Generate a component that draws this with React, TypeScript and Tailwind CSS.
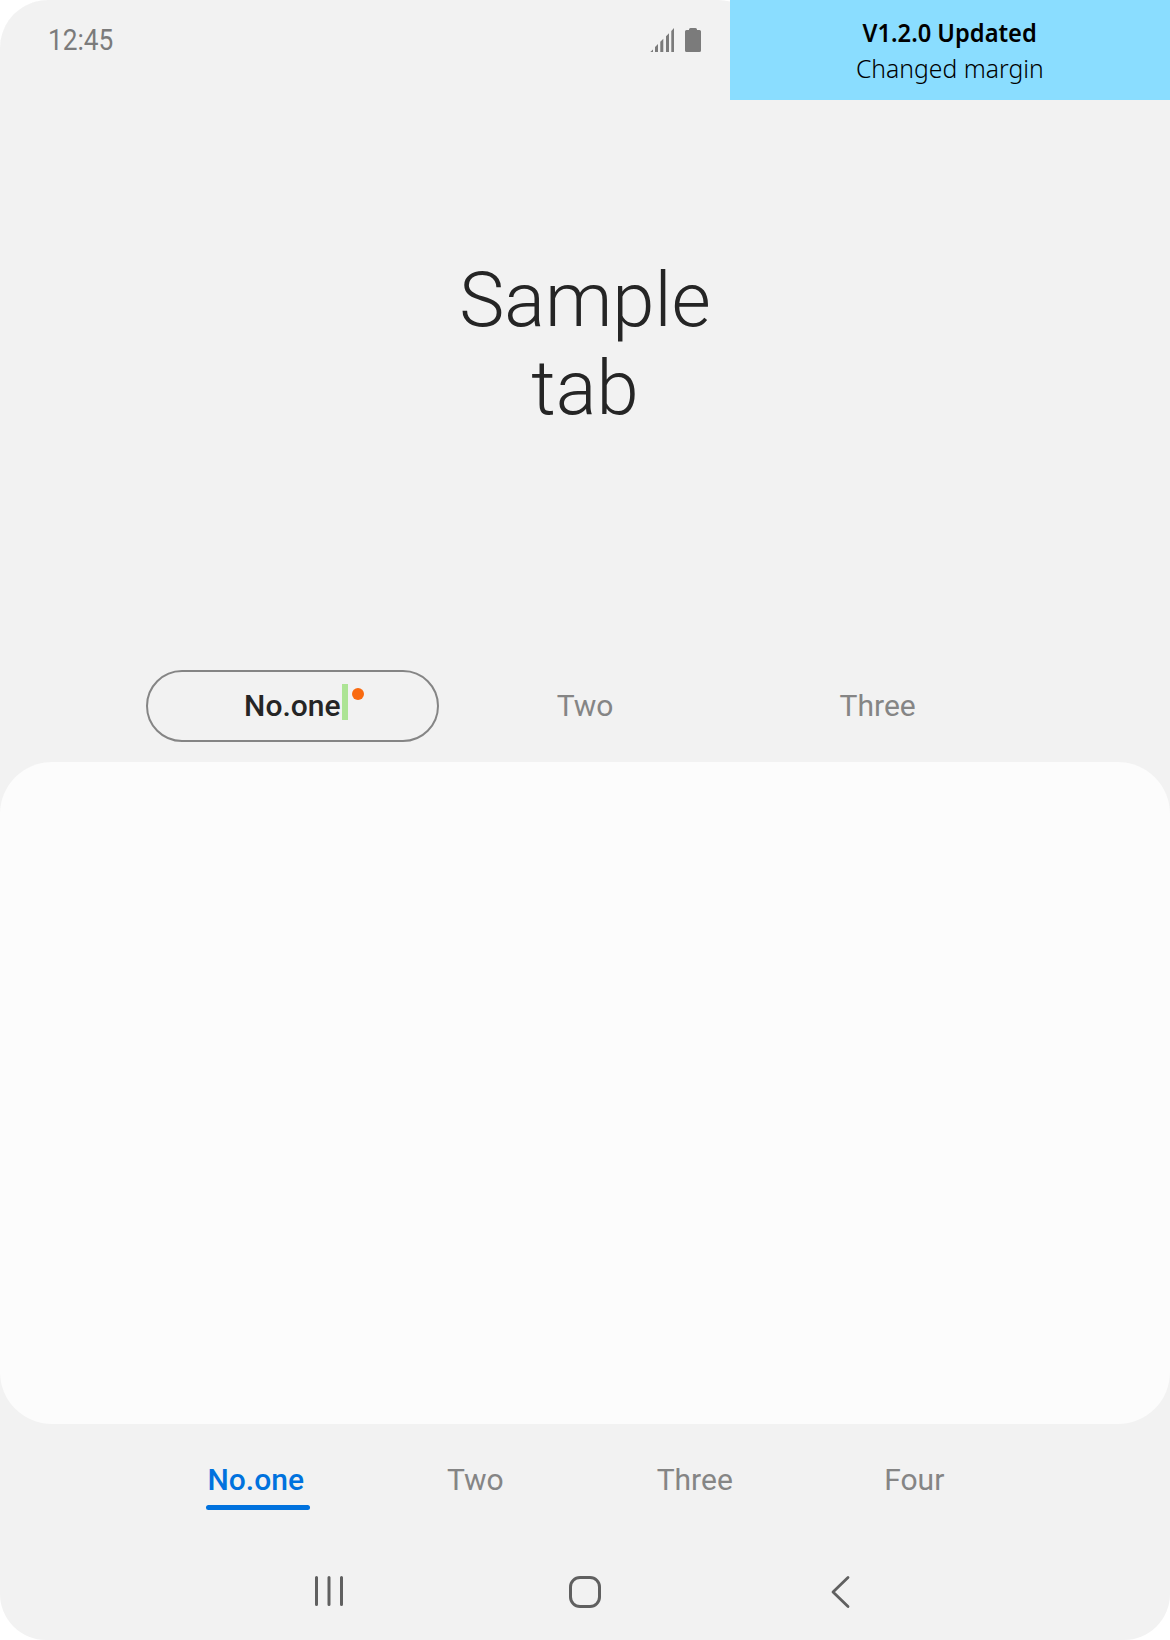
const topTabs = ["Two", "Three"];
const bottomTabs = ["Two", "Three", "Four"];

function StatusBar() {
  return (
    <header className="flex h-[100px] w-full">
      <div className="flex h-full w-[730px] shrink-0 overflow-hidden rounded-tl-[48px] bg-white">
        <div className="flex h-full w-[764px] shrink-0 items-start rounded-tr-[46px] bg-[#f2f2f2]">
          <span className="ml-[48px] mt-[22px] origin-left scale-x-[0.875] text-[30px] leading-[35px] text-[#7b7b7b]">
            12:45
          </span>
          <svg className="ml-auto mr-[62px] mt-[28px]" width="52" height="24" viewBox="0 0 52 24" fill="#7b7b7b">
            <path d="M.3 24 3 21.5V24ZM5 24v-5l3-3v8ZM10.3 24V13.700l3-3V24ZM16 24V8.300l3-3V24ZM21.300 24V3L24 0v24Z" />
            <path d="M40.500 0h5q1.500 0 1.500 1.500V2h2.500Q51 2 51 3.500v19q0 1.500-1.500 1.500h-13Q35 24 35 22.500v-19Q35 2 36.500 2H39v-.5Q39 0 40.500 0Z" />
          </svg>
        </div>
      </div>
      <aside className="flex flex-1 flex-col items-center bg-[#8addff] pt-[14px] font-['Noto_Sans',sans-serif] text-[26px] leading-[36px] text-black">
        <strong className="scale-x-[0.91] whitespace-nowrap font-semibold">V1.2.0 Updated</strong>
        <span className="scale-x-[0.95] whitespace-nowrap font-light">Changed margin</span>
      </aside>
    </header>
  );
}

export default function App() {
  return (
    <div className="h-[1640px] w-[1170px] overflow-hidden bg-white font-['Roboto',sans-serif]">
      <div className="flex h-full flex-col overflow-hidden rounded-tl-[48px] rounded-b-[46px] bg-[#f2f2f2]">
        <StatusBar />
        <h1 className="mt-[156px] h-[414px] text-center text-[76px] font-light leading-[88px] text-[#252525]">
          Sample
          <br />
          tab
        </h1>
        <nav className="mx-[146px] grid h-[72px] grid-cols-3 text-[30px] text-[#858585]">
          <button className="relative flex items-center justify-center rounded-full border-2 border-[#858585] pb-[2px] font-medium text-[#252525]">
            No.one
            <span className="absolute left-[194px] top-[12px] h-9 w-1.5 bg-[#ade495]" />
            <span className="absolute left-[204px] top-[16px] size-3 rounded-full bg-[#f96a10]" />
          </button>
          {topTabs.map((tab) => (
            <button key={tab} className="flex items-center justify-center pb-[2px]">
              {tab}
            </button>
          ))}
        </nav>
        <main className="mt-5 h-[662px] rounded-[52px] bg-[#fcfcfc]" />
        <nav className="mx-[146px] mt-[38px] grid h-[48px] grid-cols-4 text-[30px] leading-[36px] text-[#858585]">
          <button className="relative flex items-start justify-center font-medium text-[#0072de]">
            No.one
            <span className="absolute left-[60px] top-[43px] h-[5px] w-[104px] rounded-full bg-[#0072de]" />
          </button>
          {bottomTabs.map((tab) => (
            <button key={tab} className="flex items-start justify-center">
              {tab}
            </button>
          ))}
        </nav>
        <footer className="mx-[312px] mt-[64px] flex justify-between">
          <svg width="34" height="34" viewBox="0 0 34 34" fill="none" stroke="#606060" strokeWidth="3" strokeLinecap="round">
            <path d="M4.500 3.500v27M17 3.500v27M29.500 3.500v27" />
          </svg>
          <svg width="34" height="36" viewBox="0 0 34 36" fill="none" stroke="#606060" strokeWidth="3">
            <rect x="2.500" y="3.500" width="29" height="29" rx="9.500" />
          </svg>
          <svg width="34" height="36" viewBox="0 0 34 36" fill="none" stroke="#606060" strokeWidth="2.800" strokeLinecap="round" strokeLinejoin="round">
            <path d="M24 3.500 9 18l15 14.500" />
          </svg>
        </footer>
      </div>
    </div>
  );
}
